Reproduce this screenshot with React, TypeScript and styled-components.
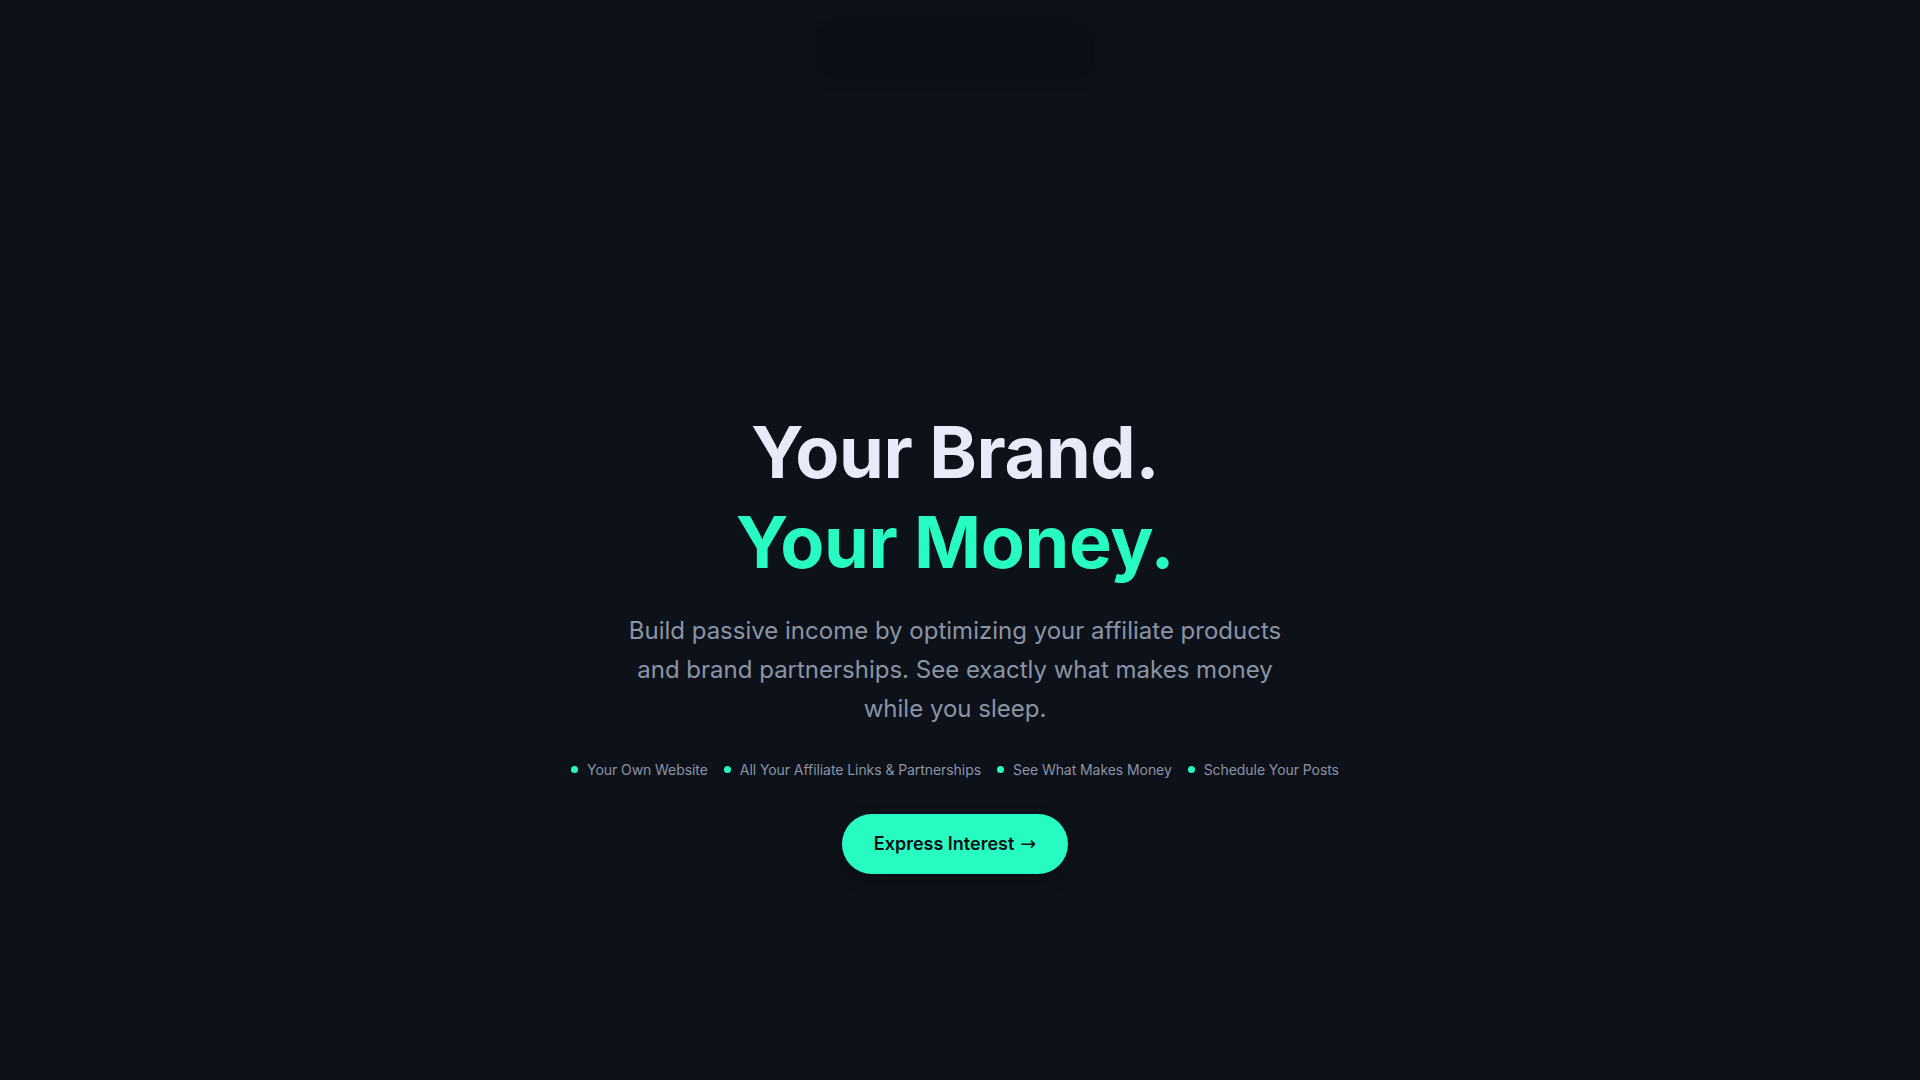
import React from "react";
import styled, { createGlobalStyle } from "styled-components";

const GlobalStyle = createGlobalStyle`
  html, body {
    margin: 0;
    padding: 0;
    height: 100%;
    overflow: hidden;
    background: #0d111a;
  }

  body {
    font-family: Inter, "Noto Sans", "Liberation Sans", sans-serif;
    color: #e6ebf7;
    -webkit-font-smoothing: antialiased;
  }
`;

const features = [
  "Your Own Website",
  "All Your Affiliate Links & Partnerships",
  "See What Makes Money",
  "Schedule Your Posts",
];

// scroll container; the slim 10px scrollbar is kept as a gutter
const Viewport = styled.div`
  height: 100vh;
  overflow-y: scroll;
  position: relative;
  box-sizing: border-box;
  padding-right: 10px;

  &::-webkit-scrollbar {
    width: 10px;
  }

  &::-webkit-scrollbar-track {
    background: #f7f7f7;
  }

  &::-webkit-scrollbar-thumb {
    background: #111111;
    border-radius: 5px;
    border: 2px solid #f7f7f7;
  }
`;

// Nav is still faded in the capture, only its glass box shows
const NavShell = styled.nav`
  position: fixed;
  top: 22px;
  left: calc(50% - 5px);
  transform: translateX(-50%);
  width: 277px;
  height: 56px;
  border-radius: 18px;
  background: rgba(9, 11, 14, 0.3);
  box-shadow: 0 4px 14px rgba(0, 0, 0, 0.08);
  z-index: 10;
`;

const Page = styled.main`
  display: flex;
  flex-direction: column;
`;

const Hero = styled.section`
  min-height: 100vh;
  box-sizing: border-box;
  padding: 200px 24px 0;
  display: flex;
  flex-direction: column;
  align-items: center;
  justify-content: center;
  text-align: center;
`;

const Heading = styled.h1`
  margin: 0 0 24px;
  font-size: 72px;
  line-height: 90px;
  font-weight: 700;
  letter-spacing: -0.005em;
  display: flex;
  flex-direction: column;
`;

const HeadLine = styled.span<{ $accent?: boolean }>`
  color: ${(p) => (p.$accent ? "#27fbc1" : "#e6ebf7")};
`;

const Lead = styled.p`
  margin: 0 0 32px;
  max-width: 672px;
  font-size: 24px;
  line-height: 39px;
  font-weight: 400;
  color: #8b94a5;
`;

const FeatureList = styled.ul`
  list-style: none;
  margin: 0 0 34px;
  padding: 0;
  display: flex;
  align-items: center;
  gap: 16px;
`;

const Feature = styled.li`
  display: flex;
  align-items: center;
  gap: 9px;
  font-size: 14px;
  line-height: 20px;
  letter-spacing: -0.005em;
  color: #8b94a5;
`;

const Dot = styled.span`
  width: 7px;
  height: 7px;
  border-radius: 50%;
  background: #27fbc1;
  flex-shrink: 0;
`;

const CtaButton = styled.button`
  border: none;
  cursor: pointer;
  padding: 15px 32px 16px;
  border-radius: 999px;
  background: #27fbc1;
  color: #0b0f16;
  font-family: Inter, "Noto Sans", sans-serif;
  font-size: 18px;
  line-height: 28px;
  font-weight: 600;
  box-shadow: 0 6px 16px rgba(0, 0, 0, 0.25);
`;

const Arrow = styled.span`
  font-family: "DejaVu Sans", "Liberation Sans", sans-serif;
  font-weight: 400;
  font-size: 19px;
  margin-left: 6px;
`;

// rest of the page sits below the fold
const BelowFold = styled.section`
  height: 4020px;
`;

const App: React.FC = () => {
  return (
    <>
      <GlobalStyle />
      <Viewport>
        <NavShell />
        <Page>
          <Hero>
            <Heading>
              <HeadLine>Your Brand.</HeadLine>
              <HeadLine $accent>Your Money.</HeadLine>
            </Heading>
            <Lead>
              Build passive income by optimizing your affiliate products and
              brand partnerships. See exactly what makes money while you sleep.
            </Lead>
            <FeatureList>
              {features.map((f) => (
                <Feature key={f}>
                  <Dot />
                  {f}
                </Feature>
              ))}
            </FeatureList>
            <CtaButton type="button">
              Express Interest<Arrow>→</Arrow>
            </CtaButton>
          </Hero>
          <BelowFold />
        </Page>
      </Viewport>
    </>
  );
};

export default App;
